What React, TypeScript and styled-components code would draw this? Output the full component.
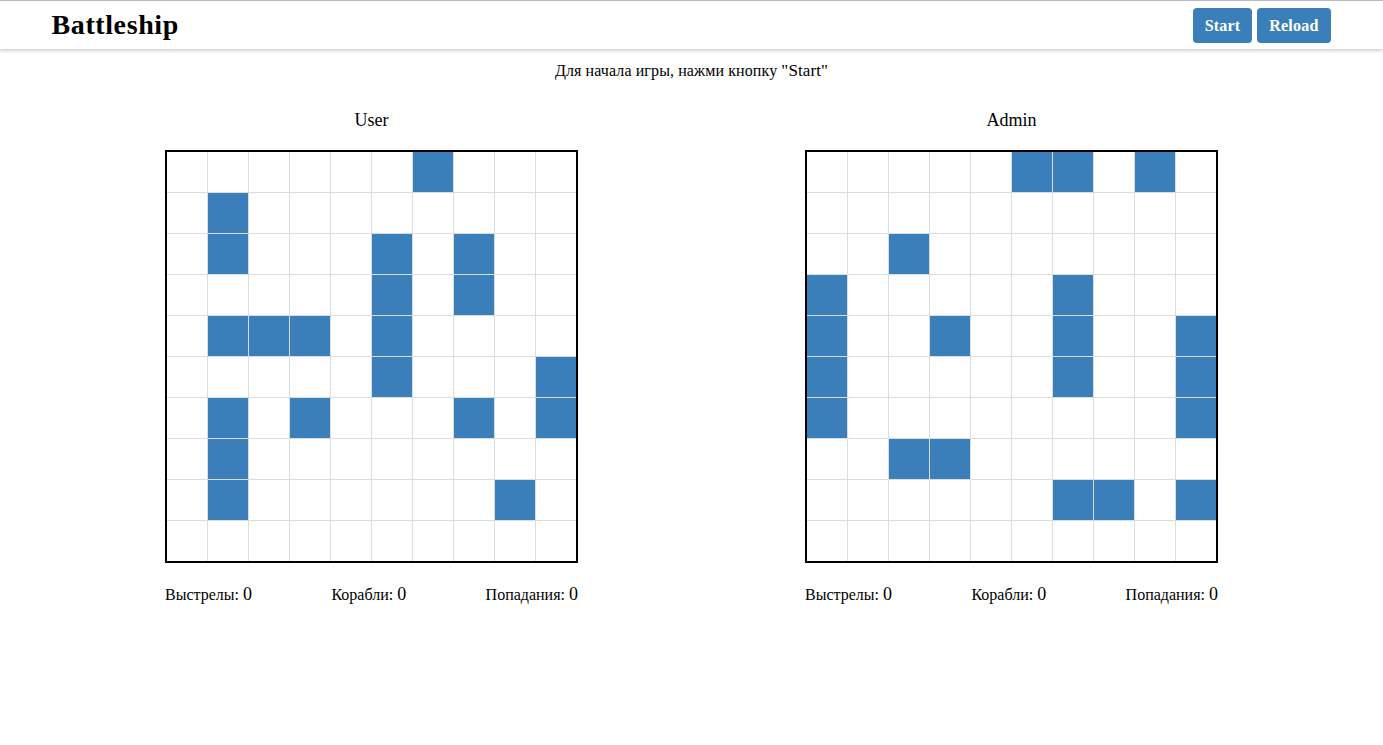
import React from 'react';
import styled, { createGlobalStyle } from 'styled-components';

const GlobalStyle = createGlobalStyle`
  body {
    margin: 0;
    background: #fff;
    font-family: "Liberation Serif", "Times New Roman", serif;
    color: #000;
  }
`;

// Расстановка кораблей: [строка, столбец]
const userShips: [number, number][] = [
  [0, 6],
  [1, 1],
  [2, 1], [2, 5], [2, 7],
  [3, 5], [3, 7],
  [4, 1], [4, 2], [4, 3], [4, 5],
  [5, 5], [5, 9],
  [6, 1], [6, 3], [6, 7], [6, 9],
  [7, 1],
  [8, 1], [8, 8],
];

const adminShips: [number, number][] = [
  [0, 5], [0, 6], [0, 8],
  [2, 2],
  [3, 0], [3, 6],
  [4, 0], [4, 3], [4, 6], [4, 9],
  [5, 0], [5, 6], [5, 9],
  [6, 0], [6, 9],
  [7, 2], [7, 3],
  [8, 6], [8, 7], [8, 9],
];

const buildField = (ships: [number, number][]): boolean[][] => {
  const field: boolean[][] = Array.from({ length: 10 }, () => Array(10).fill(false));
  ships.forEach(([r, c]) => {
    field[r][c] = true;
  });
  return field;
};

interface BoardProps {
  title: string;
  ships: [number, number][];
}

const Board: React.FC<BoardProps> = ({ title, ships }) => {
  const field = buildField(ships);
  return (
    <Column>
      <BoardTitle>{title}</BoardTitle>
      <Grid>
        {field.map((row, r) =>
          row.map((ship, c) => <Cell key={`${r}-${c}`} $ship={ship} />)
        )}
      </Grid>
      <Stats>
        <Stat>
          Выстрелы: <StatValue>0</StatValue>
        </Stat>
        <Stat>
          Корабли: <StatValue>0</StatValue>
        </Stat>
        <Stat>
          Попадания: <StatValue>0</StatValue>
        </Stat>
      </Stats>
    </Column>
  );
};

const App: React.FC = () => {
  return (
    <>
      <GlobalStyle />
      <Header>
        <HeaderInner>
          <Logo>Battleship</Logo>
          <Buttons>
            <Button>Start</Button>
            <Button>Reload</Button>
          </Buttons>
        </HeaderInner>
      </Header>
      <Main>
        <Hint>
          Для начала игры, нажми кнопку <HintAccent>"Start"</HintAccent>
        </Hint>
        <Boards>
          <Board title="User" ships={userShips} />
          <Board title="Admin" ships={adminShips} />
        </Boards>
      </Main>
    </>
  );
};

// Стили
const Header = styled.header`
  border-top: 1px solid #b8b8b8;
  background: #fff;
  box-shadow: 0 2px 3px rgba(0, 0, 0, 0.18);
  position: relative;
`;

const HeaderInner = styled.div`
  width: 1280px;
  margin: 0 auto;
  height: 48px;
  display: flex;
  align-items: center;
  justify-content: space-between;
`;

const Logo = styled.h1`
  margin: 0;
  font-size: 28px;
  font-weight: bold;
  letter-spacing: 0.6px;
  padding-bottom: 1px;
`;

const Buttons = styled.div`
  display: flex;
  gap: 5px;
  align-items: center;
  margin-top: 1px;
  margin-right: 1px;
`;

const Button = styled.button`
  height: 35px;
  padding: 0 12px;
  border: none;
  border-radius: 4px;
  background: #3a7fba;
  color: #fff;
  font-family: "Liberation Serif", "Times New Roman", serif;
  font-weight: bold;
  font-size: 16px;
  letter-spacing: 0.2px;
  cursor: pointer;

  &:hover {
    background: #2f6fa6;
  }
`;

const Main = styled.main`
  width: 1280px;
  margin: 0 auto;
`;

const Hint = styled.p`
  margin: 0;
  padding-top: 12px;
  text-align: center;
  font-size: 16px;
  line-height: 20px;
  letter-spacing: 0.1px;
`;

const HintAccent = styled.span`
  font-size: 17px;
`;

const Boards = styled.div`
  display: grid;
  grid-template-columns: 1fr 1fr;
  margin-top: 28px;
`;

const Column = styled.section`
  display: flex;
  flex-direction: column;
  align-items: center;
`;

const BoardTitle = styled.h2`
  margin: 0 0 19px;
  font-size: 18px;
  font-weight: normal;
  line-height: 22px;
`;

const Grid = styled.div`
  display: grid;
  grid-template-columns: repeat(10, 40px);
  grid-template-rows: repeat(10, 40px);
  gap: 1px;
  background: #d9dee3;
  border: 2px solid #000;
`;

const Cell = styled.div<{ $ship: boolean }>`
  background: ${({ $ship }) => ($ship ? '#3a7fba' : '#fff')};
`;

const Stats = styled.div`
  width: 413px;
  display: flex;
  justify-content: space-between;
  margin-top: 21px;
`;

const Stat = styled.span`
  font-size: 16px;
  line-height: 20px;
`;

const StatValue = styled.span`
  font-size: 18px;
`;

export default App;
